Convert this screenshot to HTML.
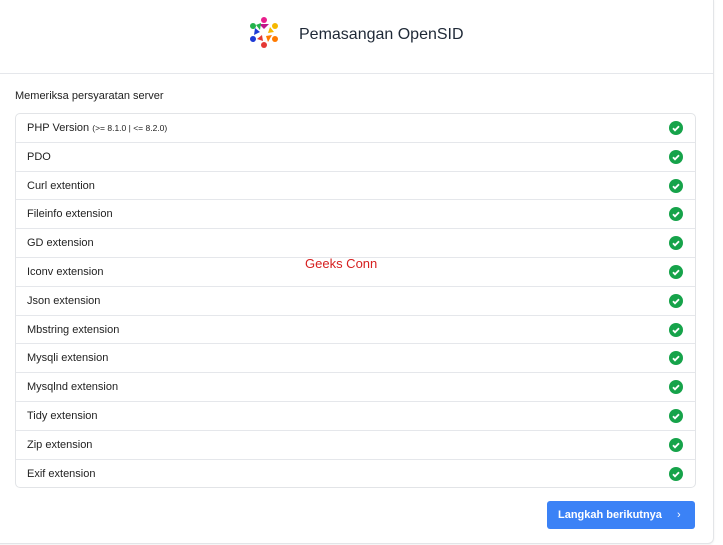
<!DOCTYPE html>
<html><head><meta charset="utf-8"><style>
body{margin:0;background:#fff;font-family:"Liberation Sans",sans-serif;width:723px;height:545px;overflow:hidden;position:relative}
.card{position:absolute;left:-1px;top:-1px;width:713px;height:543px;background:#fff;border:1px solid #e3e5e8;border-radius:0 0 6px 0;box-shadow:0 1px 2px rgba(0,0,0,.06)}
.hdr{height:73px;border-bottom:1px solid #e5e7eb;position:relative}
.title{position:absolute;left:299px;top:26px;font-size:16px;color:#1f2937}
.sub{position:absolute;left:15px;top:90px;font-size:11px;color:#222}
.list{position:absolute;left:15px;top:113px;width:679px;border:1px solid #e2e4e7;border-radius:5px}
.row{height:27.8px;border-top:1px solid #e5e7eb;font-size:11px;color:#222;line-height:28px;padding-left:11px;position:relative}
.row:first-child{border-top:none}
.row small{font-size:8.5px}
.ck{position:absolute;right:12px;top:7px;width:14px;height:14px;border-radius:50%;background:#16a34a}
.ck svg{position:absolute;left:0;top:0}
.btn{position:absolute;left:547px;top:501px;width:148px;height:28px;background:#3b82f6;border-radius:3px;color:#fff;font-size:11px;font-weight:bold;line-height:28px;text-indent:11px}
.wm{position:absolute;left:305px;top:256px;color:#d62020;font-size:13px}
</style></head><body>
<div class="card">
<div class="hdr">
<svg style="position:absolute;left:248px;top:16px" width="32" height="32" viewBox="0 0 32 32">
<circle cx="16" cy="4" r="3" fill="#e91e8c"/><path d="M11 8 L21 8 L16 13Z" fill="#c0188a"/>
<circle cx="27" cy="10" r="3" fill="#f5b800"/><path d="M22 11 L26 16 L20 17Z" fill="#f5b800"/>
<circle cx="27" cy="23" r="3" fill="#ff7a00"/><path d="M24 19 L20 26 L18 20Z" fill="#ff7a00"/>
<circle cx="16" cy="29" r="3" fill="#e53935"/><path d="M15 25 L9 23 L14 19Z" fill="#e53935"/>
<circle cx="5" cy="23" r="3" fill="#1e3ad6"/><path d="M6 19 L7 12 L12 16Z" fill="#1e3ad6"/>
<circle cx="5" cy="10" r="3" fill="#22b24c"/><path d="M8 9 L13 7 L12 14Z" fill="#22b24c"/>
</svg>
<div class="title">Pemasangan OpenSID</div>
</div>
<div class="sub">Memeriksa persyaratan server</div>
<div class="list">
<div class="row">PHP Version <small>(&gt;= 8.1.0 | &lt;= 8.2.0)</small><span class="ck"><svg width="14" height="14"><path d="M4 7.3l2 2 4-4" stroke="#fff" stroke-width="1.8" fill="none"/></svg></span></div>
<div class="row">PDO<span class="ck"><svg width="14" height="14"><path d="M4 7.3l2 2 4-4" stroke="#fff" stroke-width="1.8" fill="none"/></svg></span></div>
<div class="row">Curl extention<span class="ck"><svg width="14" height="14"><path d="M4 7.3l2 2 4-4" stroke="#fff" stroke-width="1.8" fill="none"/></svg></span></div>
<div class="row">Fileinfo extension<span class="ck"><svg width="14" height="14"><path d="M4 7.3l2 2 4-4" stroke="#fff" stroke-width="1.8" fill="none"/></svg></span></div>
<div class="row">GD extension<span class="ck"><svg width="14" height="14"><path d="M4 7.3l2 2 4-4" stroke="#fff" stroke-width="1.8" fill="none"/></svg></span></div>
<div class="row">Iconv extension<span class="ck"><svg width="14" height="14"><path d="M4 7.3l2 2 4-4" stroke="#fff" stroke-width="1.8" fill="none"/></svg></span></div>
<div class="row">Json extension<span class="ck"><svg width="14" height="14"><path d="M4 7.3l2 2 4-4" stroke="#fff" stroke-width="1.8" fill="none"/></svg></span></div>
<div class="row">Mbstring extension<span class="ck"><svg width="14" height="14"><path d="M4 7.3l2 2 4-4" stroke="#fff" stroke-width="1.8" fill="none"/></svg></span></div>
<div class="row">Mysqli extension<span class="ck"><svg width="14" height="14"><path d="M4 7.3l2 2 4-4" stroke="#fff" stroke-width="1.8" fill="none"/></svg></span></div>
<div class="row">Mysqlnd extension<span class="ck"><svg width="14" height="14"><path d="M4 7.3l2 2 4-4" stroke="#fff" stroke-width="1.8" fill="none"/></svg></span></div>
<div class="row">Tidy extension<span class="ck"><svg width="14" height="14"><path d="M4 7.3l2 2 4-4" stroke="#fff" stroke-width="1.8" fill="none"/></svg></span></div>
<div class="row">Zip extension<span class="ck"><svg width="14" height="14"><path d="M4 7.3l2 2 4-4" stroke="#fff" stroke-width="1.8" fill="none"/></svg></span></div>
<div class="row">Exif extension<span class="ck"><svg width="14" height="14"><path d="M4 7.3l2 2 4-4" stroke="#fff" stroke-width="1.8" fill="none"/></svg></span></div>
</div>
<div class="btn">Langkah berikutnya <span style="margin-left:12px;font-weight:normal">&#8250;</span></div>
<div class="wm">Geeks Conn</div>
</div>
</body></html>
